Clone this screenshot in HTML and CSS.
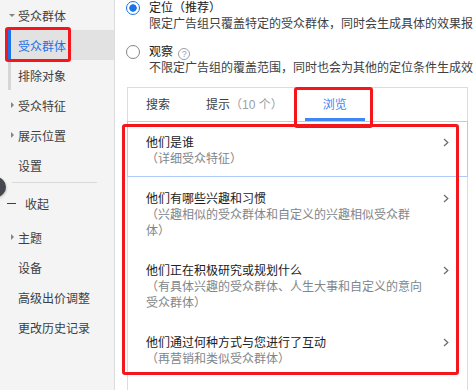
FILE: index.html
```html
<!DOCTYPE html>
<html lang="zh-CN">
  <head>
    <meta charset="UTF-8" />
    <meta name="viewport" content="width=device-width, initial-scale=1.0" />
    <title>受众群体</title>
    <link rel="stylesheet" href="styles.css">
  </head>
  <body>
    <div class="app">
      <aside class="sidebar">
        <div class="nav-item"><span class="slot"><span class="caret down"></span></span>受众群体</div>
        <div class="nav-item sub active">受众群体</div>
        <div class="nav-item sub">排除对象</div>
        <div class="nav-item"><span class="slot"><span class="caret right"></span></span>受众特征</div>
        <div class="nav-item"><span class="slot"><span class="caret right"></span></span>展示位置</div>
        <div class="nav-item"><span class="slot"></span>设置</div>
        <div class="nav-sep"></div>
        <div class="nav-item collapse"><span class="minus"></span>收起</div>
        <div class="nav-item"><span class="slot"><span class="caret right"></span></span>主题</div>
        <div class="nav-item"><span class="slot"></span>设备</div>
        <div class="nav-item"><span class="slot"></span>高级出价调整</div>
        <div class="nav-item"><span class="slot"></span>更改历史记录</div>
        <div class="fab"></div>
      </aside>

      <main class="content">
        <div class="option">
          <span class="radio checked"></span>
          <div>
            <div class="option-label">定位（推荐）</div>
            <div class="option-desc">限定广告组只覆盖特定的受众群体，同时会生成具体的效果报</div>
          </div>
        </div>
        <div class="option">
          <span class="radio"></span>
          <div>
            <div class="option-label">观察 <span class="help">?</span></div>
            <div class="option-desc">不限定广告组的覆盖范围，同时也会为其他的定位条件生成效</div>
          </div>
        </div>

        <div class="panel">
          <div class="tabs">
            <div class="tab">搜索</div>
            <div class="tab tab-hint">提示<span class="count">（10 个）</span></div>
            <div class="tab active">浏览</div>
          </div>
          <div class="list">
            <div class="item hover">
              <div class="item-text">
                <div class="item-title">他们是谁</div>
                <div class="item-sub">（详细受众特征）</div>
              </div>
              <svg class="chev" width="6" height="9" viewBox="0 0 6 9"><path d="M1 1 L4.8 4.5 L1 8" fill="none" stroke="#6b6f74" stroke-width="1.3"/></svg>
            </div>
            <div class="item">
              <div class="item-text">
                <div class="item-title">他们有哪些兴趣和习惯</div>
                <div class="item-sub">（兴趣相似的受众群体和自定义的兴趣相似受众群体）</div>
              </div>
              <svg class="chev" width="6" height="9" viewBox="0 0 6 9"><path d="M1 1 L4.8 4.5 L1 8" fill="none" stroke="#6b6f74" stroke-width="1.3"/></svg>
            </div>
            <div class="item">
              <div class="item-text">
                <div class="item-title">他们正在积极研究或规划什么</div>
                <div class="item-sub">（有具体兴趣的受众群体、人生大事和自定义的意向受众群体）</div>
              </div>
              <svg class="chev" width="6" height="9" viewBox="0 0 6 9"><path d="M1 1 L4.8 4.5 L1 8" fill="none" stroke="#6b6f74" stroke-width="1.3"/></svg>
            </div>
            <div class="item">
              <div class="item-text">
                <div class="item-title">他们通过何种方式与您进行了互动</div>
                <div class="item-sub">（再营销和类似受众群体）</div>
              </div>
              <svg class="chev" width="6" height="9" viewBox="0 0 6 9"><path d="M1 1 L4.8 4.5 L1 8" fill="none" stroke="#6b6f74" stroke-width="1.3"/></svg>
            </div>
          </div>
        </div>
      </main>

      <!-- red annotation marks -->
      <div class="mark mark-nav"></div>
      <div class="mark mark-tab"></div>
      <div class="mark mark-list"></div>
    </div>
  </body>
</html>
```

FILE: styles.css
```css
html,
body {
  margin: 0;
  height: 100%;
  overflow: hidden;
}
body {
  font-family: "Liberation Sans", "Noto Sans CJK SC", sans-serif;
  font-size: 12px;
  color: #3c4043;
  background-color: #fff;
}
.app {
  position: relative;
  display: flex;
  height: 100vh;
  overflow: hidden;
}

/* sidebar */
.sidebar {
  position: relative;
  flex: 0 0 114px;
  background-color: #f4f4f4;
  border-right: 1px solid #dcdcdc;
}
.nav-item {
  display: flex;
  align-items: center;
  height: 30px;
  color: #3c4043;
  white-space: nowrap;
}
.slot {
  display: flex;
  align-items: center;
  justify-content: center;
  width: 10px;
  margin: 0 1px 0 7px;
}
.caret {
  width: 0;
  height: 0;
  border-style: solid;
  border-color: transparent;
}
.caret.down {
  border-width: 3px 3px 0 3px;
  border-top-color: #80868b;
}
.caret.right {
  border-width: 3px 0 3px 3px;
  border-left-color: #80868b;
}
.nav-item.sub {
  margin-left: 8px;
  padding-left: 7px;
  border-left: 3px solid #d6d6d6;
}
.nav-item.active {
  background-color: #e2e2e2;
  border-left-color: #1a73e8;
  color: #1a73e8;
}
.nav-sep {
  margin: 2px 17px 5px 12px;
  border-top: 1px solid #dadada;
}
.nav-item.collapse {
  padding-left: 7px;
  margin-bottom: 4px;
}
.minus {
  width: 9px;
  border-top: 1px solid #3c4043;
  margin-right: 9px;
}
.fab {
  position: absolute;
  left: -14px;
  top: 177px;
  width: 20px;
  height: 20px;
  border-radius: 50%;
  background-color: #45484c;
  box-shadow: 0 1px 3px rgba(0, 0, 0, 0.3);
}

/* content */
.content {
  flex: 1;
  display: flex;
  flex-direction: column;
  min-width: 0;
  padding: 0 5px 0 12px;
}
.option {
  display: flex;
  align-items: flex-start;
  white-space: nowrap;
}
.option + .option {
  margin-top: 11px;
}
.radio {
  flex: 0 0 auto;
  box-sizing: border-box;
  width: 14px;
  height: 14px;
  margin: 1px 9px 0 -1px;
  border: 1.5px solid #80868b;
  border-radius: 50%;
}
.radio.checked {
  border-color: #1a73e8;
  background: radial-gradient(circle, #1a73e8 0 3.4px, #fff 4px);
}
.option-label {
  line-height: 16px;
  color: #202124;
}
.option-desc {
  line-height: 17px;
  color: #3c4043;
}
.help {
  display: inline-block;
  box-sizing: border-box;
  width: 12px;
  height: 12px;
  margin-left: 2px;
  border: 1px solid #9aa0a6;
  border-radius: 50%;
  color: #9aa0a6;
  font-size: 9px;
  line-height: 10px;
  text-align: center;
  vertical-align: -1px;
}

.panel {
  flex: 1;
  margin-top: 10px;
  border: 1px solid #dadce0;
  border-bottom: none;
}
.tabs {
  display: flex;
  white-space: nowrap;
}
.tab {
  padding: 4px 18px 0;
  line-height: 26px;
  border-bottom: 3px solid transparent;
  color: #3c4043;
}
.tab-hint {
  padding-right: 22px;
}
.count {
  color: #9aa0a6;
}
.tab.active {
  color: #4285f4;
  border-bottom-color: #4285f4;
}
.list {
  margin: 0 -1px;
}
.item {
  display: flex;
  justify-content: space-between;
  align-items: flex-start;
  padding: 13px 18px 9px;
  border: 1px solid transparent;
}
.item.hover {
  border-color: #aecbfa;
}
.item-text {
  max-width: 282px;
  line-height: 16px;
}
.item-title {
  color: #202124;
}
.item-sub {
  color: #80868b;
}
.chev {
  flex: 0 0 auto;
  margin-top: 3px;
}

/* annotation boxes */
.mark {
  position: absolute;
  box-sizing: border-box;
  border: 3px solid #f5161b;
  border-radius: 3px;
}
.mark-nav {
  left: 5px;
  top: 27px;
  width: 66px;
  height: 35px;
}
.mark-tab {
  left: 294px;
  top: 87px;
  width: 79px;
  height: 41px;
}
.mark-list {
  left: 122px;
  top: 124px;
  width: 337px;
  height: 251px;
}
```
